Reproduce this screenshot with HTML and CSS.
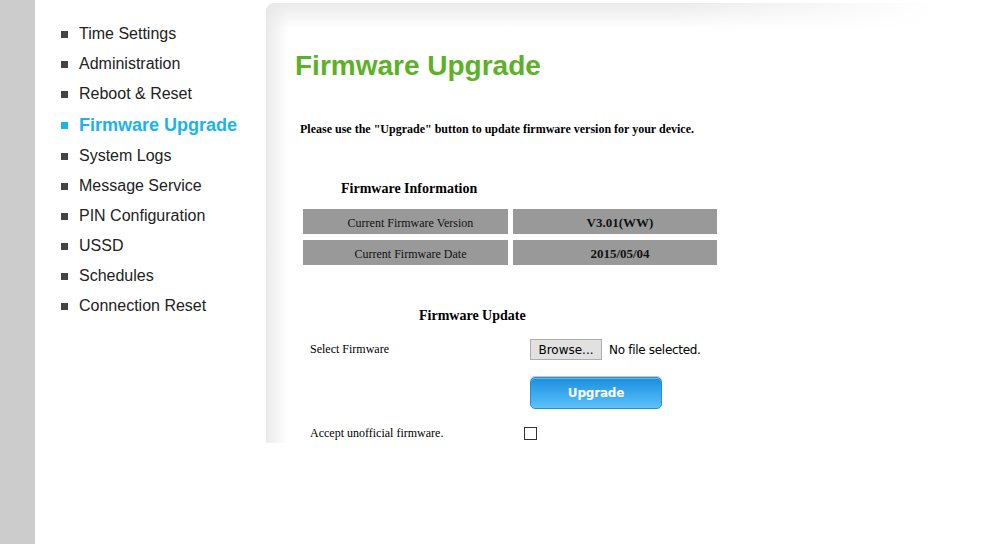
FILE: index.html
```html
<!DOCTYPE html>
<html>
<head>
<meta charset="utf-8">
<link rel="stylesheet" href="styles.css">
</head>
<body>
<div class="strip"></div>
<nav class="sidebar">
  <ul class="menu">
    <li class="item">Time Settings</li>
    <li class="item">Administration</li>
    <li class="item">Reboot &amp; Reset</li>
    <li class="item active">Firmware Upgrade</li>
    <li class="item">System Logs</li>
    <li class="item">Message Service</li>
    <li class="item">PIN Configuration</li>
    <li class="item">USSD</li>
    <li class="item">Schedules</li>
    <li class="item">Connection Reset</li>
  </ul>
</nav>
<main class="panel">
  <h1 class="title">Firmware Upgrade</h1>
  <p class="desc">Please use the "Upgrade" button to update firmware version for your device.</p>
  <h2 class="info-head">Firmware Information</h2>
  <div class="info-grid">
    <div class="cell">Current Firmware Version</div>
    <div class="cell value">V3.01(WW)</div>
    <div class="cell">Current Firmware Date</div>
    <div class="cell value">2015/05/04</div>
  </div>
  <h2 class="update-head">Firmware Update</h2>
  <div class="row row-file">
    <span class="label">Select Firmware</span>
    <span class="file"><span class="browse">Browse...</span><span class="nofile">No file selected.</span></span>
  </div>
  <div class="row row-btn">
    <span class="label"></span>
    <span class="upgrade">Upgrade</span>
  </div>
  <div class="row row-check">
    <span class="label">Accept unofficial firmware.</span>
    <span class="checkbox"></span>
  </div>
</main>
</body>
</html>
```
FILE: styles.css
```css
html, body {
  margin: 0;
  padding: 0;
  background: #fff;
}
body {
  display: flex;
  align-items: flex-start;
  width: 986px;
  height: 544px;
  overflow: hidden;
}
.strip {
  width: 35px;
  height: 544px;
  background: #cccccc;
  flex: none;
}
.sidebar {
  width: 231px;
  flex: none;
}
.menu {
  list-style: none;
  margin: 0;
  padding: 19px 0 0 26px;
  font-family: "Liberation Sans", Arial, sans-serif;
  font-size: 16px;
  color: #222;
}
.item {
  display: flex;
  align-items: center;
  height: 30px;
}
.item::before {
  content: "";
  width: 7px;
  height: 7px;
  background: #444;
  margin-right: 11px;
  flex: none;
}
.item.active {
  height: 32px;
  color: #1ab3ee;
  font-weight: bold;
  font-size: 18px;
}
.item.active::before {
  background: #1ab3ee;
}
.panel {
  width: 669px;
  height: 440px;
  margin-top: 3px;
  flex: none;
  overflow: hidden;
  border-top-left-radius: 8px;
  background:
    linear-gradient(to right, rgba(255,255,255,0) 60%, #fff 100%),
    linear-gradient(to bottom, rgba(232,232,232,0.9), rgba(255,255,255,0) 26px),
    linear-gradient(to right, rgba(232,232,232,0.9), rgba(255,255,255,0) 22px),
    #fff;
  font-family: "Liberation Serif", "Times New Roman", serif;
  color: #000;
}
.title {
  margin: 46px 0 0 29px;
  font-family: "Liberation Sans", Arial, sans-serif;
  font-size: 28px;
  line-height: 34px;
  font-weight: bold;
  color: #5cb127;
}
.desc {
  margin: 39px 0 0 34px;
  font-size: 12px;
  line-height: 15px;
  font-weight: bold;
}
.info-head {
  margin: 43px 0 0 75px;
  font-size: 14px;
  line-height: 17px;
  font-weight: bold;
}
.info-grid {
  margin: 12px 0 0 37px;
  display: grid;
  grid-template-columns: 205px 204px;
  column-gap: 5px;
  row-gap: 6px;
  width: 414px;
}
.cell {
  box-sizing: border-box;
  background: #999999;
  height: 25px;
  padding: 3px 0 0 10px;
  display: flex;
  align-items: center;
  justify-content: center;
  font-size: 12px;
  color: #111;
}
.cell.value {
  font-weight: bold;
  font-size: 13px;
}
.update-head {
  margin: 42px 0 0 153px;
  font-size: 14px;
  line-height: 17px;
  font-weight: bold;
}
.row {
  display: flex;
  align-items: center;
  margin-left: 44px;
}
.label {
  width: 220px;
  flex: none;
  font-size: 12px;
}
.row-file {
  margin-top: 15px;
  height: 21px;
}
.file {
  display: flex;
  align-items: center;
  font-family: "DejaVu Sans", Tahoma, sans-serif;
  font-size: 12px;
  color: #000;
}
.browse {
  box-sizing: border-box;
  width: 72px;
  height: 21px;
  display: flex;
  align-items: center;
  justify-content: center;
  background: #e1e1e1;
  border: 1px solid #adadad;
  margin-right: 7px;
}
.nofile {
  letter-spacing: -0.3px;
}
.row-btn {
  margin-top: 17px;
}
.upgrade {
  box-sizing: border-box;
  width: 132px;
  height: 32px;
  display: flex;
  align-items: center;
  justify-content: center;
  border-radius: 5px;
  border: 1px solid #2a8fd0;
  background: linear-gradient(to bottom, #1a8fdc 0%, #3aa8ee 50%, #5cc3fa 100%);
  box-shadow: inset 0 1px 0 rgba(255,255,255,0.35), 0 -1px 0 #c8c8c8;
  color: #fff;
  font-family: "DejaVu Sans", Verdana, sans-serif;
  font-weight: bold;
  font-size: 12px;
  letter-spacing: -0.2px;
}
.row-check {
  margin-top: 17px;
}
.row-check .label {
  width: 214px;
}
.checkbox {
  box-sizing: border-box;
  width: 13px;
  height: 13px;
  border: 1px solid #333;
  background: #fff;
}
```
